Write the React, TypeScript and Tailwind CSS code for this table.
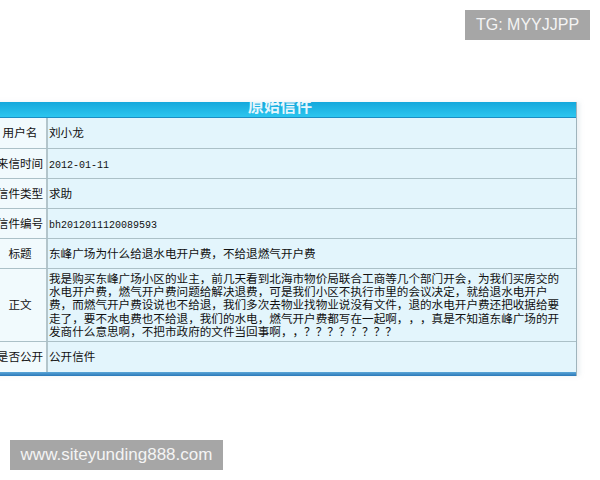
const rows: { label: string; value: React.ReactNode; tall?: boolean }[] = [
  { label: "用户名", value: "刘小龙" },
  { label: "来信时间", value: <span className="font-['Liberation_Mono',monospace] text-[10px]">2012-01-11</span> },
  { label: "信件类型", value: "求助" },
  { label: "信件编号", value: <span className="font-['Liberation_Mono',monospace] text-[10px]">bh2012011120089593</span> },
  { label: "标题", value: "东峰广场为什么给退水电开户费，不给退燃气开户费" },
  {
    label: "正文",
    tall: true,
    value:
      "我是购买东峰广场小区的业主，前几天看到北海市物价局联合工商等几个部门开会，为我们买房交的水电开户费，燃气开户费问题给解决退费，可是我们小区不执行市里的会议决定，就给退水电开户费，而燃气开户费设说也不给退，我们多次去物业找物业说没有文件，退的水电开户费还把收据给要走了，要不水电费也不给退，我们的水电，燃气开户费都写在一起啊，，，真是不知道东峰广场的开发商什么意思啊，不把市政府的文件当回事啊，，？？？？？？？？",
  },
  { label: "是否公开", value: "公开信件" },
]

export default function App() {
  return (
    <div className="relative w-[600px] h-[480px] overflow-hidden bg-white font-['Noto_Sans_CJK_SC',sans-serif] text-[11.6px] text-[#111] [text-spacing-trim:space-all]">
      <div className="absolute right-[10px] top-[10px] flex h-[30px] w-[125px] items-center justify-center bg-[#a6a6a6] font-['Liberation_Sans',sans-serif] text-[16px] text-[#f4f4f4]">
        TG: MYYJJPP
      </div>

      <div className="pt-[102px]">
        <div className="-ml-[6px] w-[583px] border-r border-[#9fb4bc] shadow-[3px_0_4px_rgba(180,200,210,0.25)]">
          <div className="h-[16px] overflow-hidden border-b border-[#1b8ec4] bg-gradient-to-b from-[#13a8dc] to-[#2cc6ef] pr-[10px] text-center">
            <div className="-mt-[5px] text-[16px] font-bold leading-[16px] text-[#e6f6fd]">原始信件</div>
          </div>
          {rows.map((r, i) => (
            <div
              key={r.label}
              className={`flex border-b border-[#abc0c7] ${r.tall ? "h-[73px]" : i === 0 ? "h-[31px]" : "h-[30px]"} ${i === rows.length - 1 ? "border-b-0" : ""}`}
            >
              <div className="flex w-[54px] shrink-0 items-center justify-center whitespace-nowrap border-r-2 border-[#b3c5cb] bg-[#f1fafd]">
                {r.label}
              </div>
              <div className={`flex flex-1 items-center bg-[#e3f5fc] pl-[1px] ${r.tall ? "pr-[12px] leading-[13.3px]" : ""}`}>
                <div>{r.value}</div>
              </div>
            </div>
          ))}
          <div className="h-[4px] bg-gradient-to-b from-[#5aa6d8] to-[#2a78b8]" />
        </div>
      </div>

      <div className="absolute left-[10px] top-[440px] flex h-[30px] w-[213px] items-center justify-center bg-[#a6a6a6] font-['Liberation_Sans',sans-serif] text-[17px] text-[#f4f4f4]">
        www.siteyunding888.com
      </div>
    </div>
  )
}
